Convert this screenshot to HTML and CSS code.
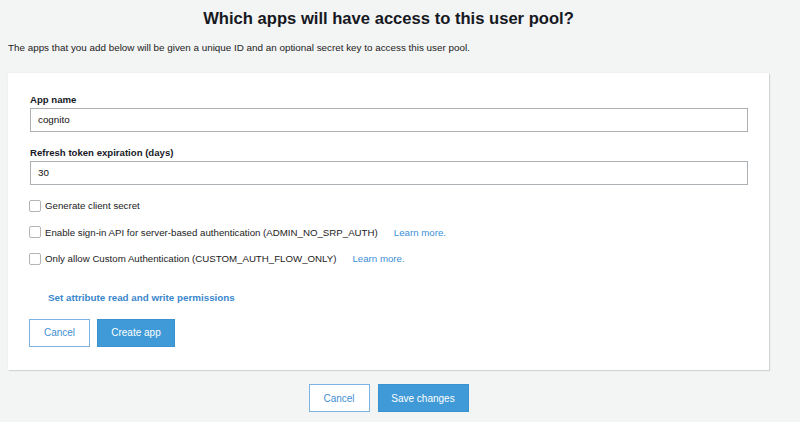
FILE: index.html
```html
<!DOCTYPE html>
<html>
<head>
<meta charset="utf-8">
<link rel="stylesheet" href="styles.css">
</head>
<body>
<div class="page">
  <h1 class="title">Which apps will have access to this user pool?</h1>
  <p class="intro">The apps that you add below will be given a unique ID and an optional secret key to access this user pool.</p>
  <div class="card">
    <div class="field">
      <label class="label">App name</label>
      <div class="input">cognito</div>
    </div>
    <div class="field">
      <label class="label">Refresh token expiration (days)</label>
      <div class="input">30</div>
    </div>
    <div class="checks">
      <div class="check"><span class="box"></span><span class="check-text">Generate client secret</span></div>
      <div class="check"><span class="box"></span><span class="check-text">Enable sign-in API for server-based authentication (ADMIN_NO_SRP_AUTH)</span><a class="learn">Learn more.</a></div>
      <div class="check"><span class="box"></span><span class="check-text">Only allow Custom Authentication (CUSTOM_AUTH_FLOW_ONLY)</span><a class="learn">Learn more.</a></div>
    </div>
    <a class="perm">Set attribute read and write permissions</a>
    <div class="actions">
      <button class="btn btn-outline btn-cancel">Cancel</button>
      <button class="btn btn-primary btn-create">Create app</button>
    </div>
  </div>
  <div class="footer">
    <button class="btn btn-outline btn-cancel">Cancel</button>
    <button class="btn btn-primary btn-save">Save changes</button>
  </div>
</div>
</body>
</html>
```
FILE: styles.css
```css
* { box-sizing: border-box; }
html, body { margin: 0; padding: 0; }
body {
  background: #f3f4f4;
  font-family: "Liberation Sans", Arial, sans-serif;
  color: #111;
  width: 800px;
  height: 422px;
  overflow: hidden;
}
.page {
  width: 761px;
  margin-left: 8px;
}
.title {
  margin: 0;
  padding-top: 8px;
  font-size: 16.6px;
  line-height: 22px;
  font-weight: bold;
  text-align: center;
  color: #16191f;
}
.intro {
  margin: 0;
  margin-top: 11px;
  font-size: 9.85px;
  line-height: 14px;
  color: #222;
}
.card {
  margin-top: 18px;
  background: #fff;
  box-shadow: 1px 1px 1px rgba(0,0,0,0.12), 0 0 1px rgba(0,0,0,0.08);
  padding: 20px 21px 24px 22px;
  height: 297px;
}
.field { display: flex; flex-direction: column; }
.field + .field { margin-top: 14px; }
.label {
  font-size: 9.6px;
  line-height: 14px;
  font-weight: bold;
  color: #16191f;
  margin-bottom: 1px;
}
.input {
  height: 24px;
  border: 1px solid #aab0b3;
  font-size: 9.8px;
  line-height: 22px;
  padding-left: 7px;
  color: #111;
}
.checks {
  margin-top: 14px;
  display: flex;
  flex-direction: column;
  gap: 13.5px;
}
.check {
  display: flex;
  align-items: center;
  height: 13px;
  font-size: 9.7px;
  color: #222;
}
.box {
  width: 12px;
  height: 12px;
  border: 1px solid #b4b4b4;
  border-radius: 2px;
  background: #fff;
  margin-left: -1px;
  margin-right: 4px;
  flex: none;
}
.learn {
  color: #3c8fd6;
  margin-left: 16px;
}
.perm {
  display: block;
  margin-top: 25.5px;
  margin-left: 18px;
  font-size: 9.8px;
  line-height: 14px;
  font-weight: bold;
  color: #3a87cc;
}
.actions {
  margin-top: 14px;
  display: flex;
  gap: 7px;
  margin-left: -1px;
}
.btn {
  height: 28px;
  font-family: "Liberation Sans", Arial, sans-serif;
  font-size: 10px;
  padding: 0;
  cursor: pointer;
}
.btn-outline {
  background: #fff;
  border: 1px solid #7db3e2;
  color: #3f8fd2;
}
.btn-primary {
  background: #3f9ad7;
  border: 1px solid #3a93d0;
  color: #fff;
}
.btn-cancel { width: 61px; }
.btn-create { width: 78px; }
.btn-save { width: 91px; }
.footer {
  margin-top: 14px;
  display: flex;
  justify-content: center;
  gap: 8px;
}
```
